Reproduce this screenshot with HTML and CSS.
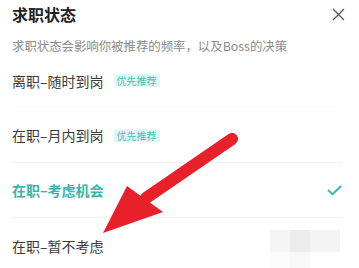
FILE: index.html
```html
<!DOCTYPE html>
<html lang="zh-CN">
<head>
<meta charset="utf-8">
<link rel="stylesheet" href="styles.css">
</head>
<body>
<div class="sheet">
  <div class="header">
    <div class="title">求职状态</div>
    <svg class="close" width="13" height="13" viewBox="0 0 13 13"><path d="M1 1L12 12M12 1L1 12" stroke="#555" stroke-width="1.3" fill="none"/></svg>
  </div>
  <div class="sub">求职状态会影响你被推荐的频率，以及Boss的决策</div>
  <div class="list">
    <div class="opt first"><span class="label">离职–随时到岗</span><span class="badge">优先推荐</span></div>
    <div class="opt"><span class="label">在职–月内到岗</span><span class="badge">优先推荐</span></div>
    <div class="opt active"><span class="label">在职–考虑机会</span>
      <svg class="check" width="15" height="11" viewBox="0 0 15 11"><path d="M1.5 5.5L5.5 9.2L13.5 1.5" stroke="#3fb7b1" stroke-width="2" fill="none" stroke-linecap="round" stroke-linejoin="round"/></svg>
    </div>
    <div class="opt last"><span class="label">在职–暂不考虑</span></div>
  </div>
  <div class="mosaic">
    <span class="m1"></span><span class="m2"></span><span class="m3"></span>
    <span class="m4"></span><span class="m5"></span><span class="m6"></span>
  </div>
  <svg class="arrow" width="359" height="268" viewBox="0 0 359 268">
    <line x1="232" y1="139" x2="146" y2="198" stroke="#e8202a" stroke-width="12" stroke-linecap="round"/>
    <polygon points="103,233 127,186 163,212" fill="#e8202a"/>
  </svg>
</div>
</body>
</html>
```
FILE: styles.css
```css
* { box-sizing: border-box; }
html, body { margin: 0; padding: 0; background: #fff; }
body {
  width: 359px;
  height: 268px;
  overflow: hidden;
  font-family: "Noto Sans CJK SC", "Noto Sans", sans-serif;
}
.sheet {
  position: relative;
  width: 359px;
  height: 268px;
}
.header {
  display: flex;
  align-items: center;
  justify-content: space-between;
  height: 28px;
  padding: 0 14px 0 12px;
}
.title {
  font-size: 16px;
  font-weight: bold;
  color: #222;
  line-height: 28px;
}
.close { display: block; }
.sub {
  margin-top: 10px;
  padding-left: 12px;
  font-size: 12.4px;
  line-height: 16px;
  color: #8a8a8a;
}
.list {
  display: flex;
  flex-direction: column;
  padding: 0 17px 0 12px;
}
.opt {
  display: flex;
  align-items: center;
  height: 55px;
  border-bottom: 1px solid #f1f1f1;
  font-size: 14px;
  color: #3a3a3a;
}
.opt.first { height: 54px; border-bottom-color: #fbfbfb; }
.opt.last { border-bottom: none; }
.label { line-height: 22px; }
.badge {
  margin-left: 10px;
  height: 13px;
  padding: 0 3px;
  background: #e2f6f5;
  color: #4cbfba;
  font-size: 10px;
  line-height: 13px;
  border-radius: 1px;
  font-weight: normal;
}
.opt.active { justify-content: space-between; color: #38b3ae; font-weight: bold; }
.check { display: block; }
.mosaic {
  position: absolute;
  left: 270px;
  top: 230px;
  display: grid;
  grid-template-columns: 20px 20px 30px;
  grid-template-rows: 22px 16px;
}
.m1 { background: #f5f5f5; }
.m2 { background: #ececec; }
.m3 { background: #f4f4f4; }
.m4 { background: #fcfcfc; }
.m5 { background: #f8f8f8; }
.m6 { background: #fff; }
.arrow {
  position: absolute;
  left: 0;
  top: 0;
  pointer-events: none;
}
```
